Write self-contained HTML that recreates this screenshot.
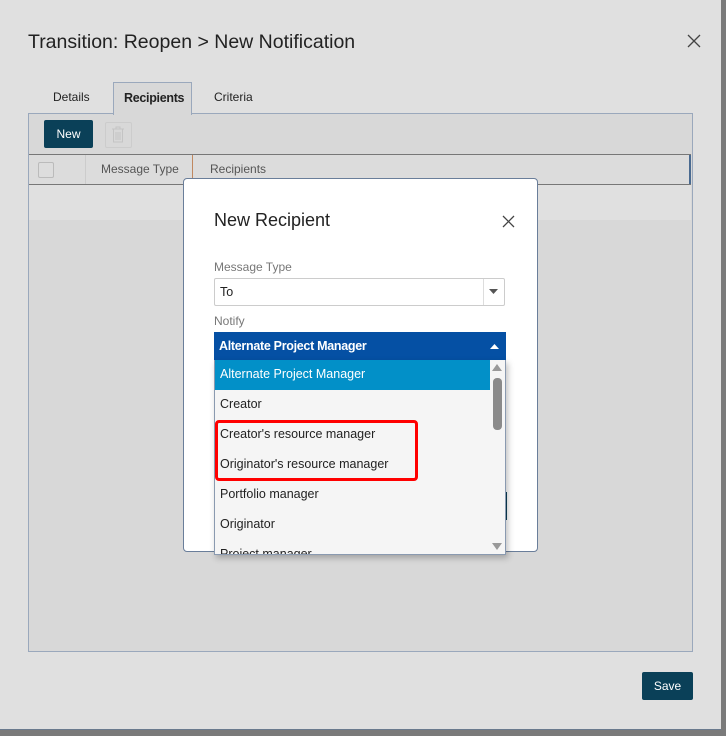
<!DOCTYPE html>
<html><head><style>
*{box-sizing:border-box;margin:0;padding:0}
body{width:726px;height:736px;background:#7a7a7a;font-family:"Liberation Sans","DejaVu Sans",sans-serif;position:relative;overflow:hidden}
.a{position:absolute}
</style></head><body>
<div class="a" style="left:0;top:0;width:721px;height:730px;background:#e0e0e0;border-bottom:1px solid #6a7a8e"></div>
<div class="a" style="left:28px;top:31px;font-size:19.5px;color:#222">Transition: Reopen &gt; New Notification</div>
<svg class="a" style="left:687px;top:34px" width="14" height="14"><path d="M1 1L13 13M13 1L1 13" stroke="#444" stroke-width="1.3"/></svg>
<div class="a" style="left:53px;top:90px;font-size:12px;color:#222">Details</div>
<div class="a" style="left:28px;top:113px;width:665px;height:539px;background:#d8d8d8;border:1px solid #9aa8bc"></div>
<div class="a" style="left:113px;top:82px;width:79px;height:33px;background:#d8d8d8;border:1px solid #9aa8bc;border-bottom:none"></div>
<div class="a" style="left:124px;top:91px;font-size:12.5px;color:#222;font-weight:bold;letter-spacing:-0.3px">Recipients</div>
<div class="a" style="left:214px;top:90px;font-size:12px;color:#222">Criteria</div>
<div class="a" style="left:44px;top:120px;width:49px;height:28px;background:#0a4058;border-radius:2px;color:#fff;font-size:12px;text-align:center;line-height:28px">New</div>
<div class="a" style="left:105px;top:122px;width:27px;height:26px;border:1px solid #ccc;border-radius:2px"></div>
<svg class="a" style="left:111px;top:126px" width="14" height="17"><path d="M1 3H13M5 3V1H9V3M2.5 3V16H11.5V3M5 6V14M7 6V14M9 6V14" stroke="#c4c4c4" fill="none"/></svg>
<div class="a" style="left:29px;top:154px;width:662px;height:31px;background:#dcdcdc;border-top:1px solid #777;border-bottom:1px solid #777"></div>
<div class="a" style="left:38px;top:162px;width:16px;height:16px;border:1px solid #bbb;border-radius:2px;background:#ddd"></div>
<div class="a" style="left:85px;top:155px;width:1px;height:29px;background:#ccc"></div>
<div class="a" style="left:192px;top:155px;width:1px;height:29px;background:#c08860"></div>
<div class="a" style="left:689px;top:155px;width:2px;height:29px;background:#4a6a90"></div>
<div class="a" style="left:101px;top:162px;font-size:12px;color:#555">Message Type</div>
<div class="a" style="left:210px;top:162px;font-size:12px;color:#555">Recipients</div>
<div class="a" style="left:29px;top:185px;width:662px;height:35px;background:#e0e0e0"></div>
<div class="a" style="left:183px;top:178px;width:355px;height:374px;background:#fff;border:1px solid #6a7e9a;border-radius:4px"></div>
<div class="a" style="left:214px;top:210px;font-size:18px;color:#222">New Recipient</div>
<svg class="a" style="left:502px;top:215px" width="13" height="13"><path d="M1 1L12 12M12 1L1 12" stroke="#444" stroke-width="1.3"/></svg>
<div class="a" style="left:214px;top:260px;font-size:12px;color:#777">Message Type</div>
<div class="a" style="left:214px;top:278px;width:291px;height:28px;border:1px solid #ccc;border-radius:2px"></div>
<div class="a" style="left:483px;top:279px;width:1px;height:26px;background:#ddd"></div>
<div class="a" style="left:220px;top:285px;font-size:12.5px;color:#222">To</div>
<svg class="a" style="left:489px;top:289px" width="9" height="6"><path d="M0 0H9L4.5 5Z" fill="#555"/></svg>
<div class="a" style="left:214px;top:314px;font-size:12px;color:#777">Notify</div>
<div class="a" style="left:214px;top:332px;width:292px;height:28px;background:#0550a4"></div>
<div class="a" style="left:219px;top:339px;font-size:12.5px;font-weight:bold;color:#fff;letter-spacing:-0.3px">Alternate Project Manager</div>
<svg class="a" style="left:490px;top:344px" width="9" height="5"><path d="M0 5H9L4.5 0Z" fill="#fff"/></svg>
<div class="a" style="left:502px;top:492px;width:5px;height:28px;background:#0a4058"></div>
<div class="a" style="left:214px;top:360px;width:292px;height:195px;background:#f5f5f5;border:1px solid #8a9ab0;border-top:none;overflow:hidden;box-shadow:2px 3px 6px rgba(0,0,0,.25)">
<div style="width:276px;height:30px;background:#0290c8;color:#fff;font-size:12.5px;padding:7px 0 0 5px">Alternate Project Manager</div>
<div style="height:30px;font-size:12.5px;color:#222;padding:7px 0 0 5px">Creator</div>
<div style="height:30px;font-size:12.5px;color:#222;padding:7px 0 0 5px">Creator's resource manager</div>
<div style="height:30px;font-size:12.5px;color:#222;padding:7px 0 0 5px">Originator's resource manager</div>
<div style="height:30px;font-size:12.5px;color:#222;padding:7px 0 0 5px">Portfolio manager</div>
<div style="height:30px;font-size:12.5px;color:#222;padding:7px 0 0 5px">Originator</div>
<div style="height:30px;font-size:12.5px;color:#222;padding:7px 0 0 5px">Project manager</div>
</div>
<div class="a" style="left:490px;top:360px;width:15px;height:194px;background:#f5f5f5"></div>
<svg class="a" style="left:492px;top:364px" width="10" height="7"><path d="M0 7H10L5 0Z" fill="#999"/></svg>
<div class="a" style="left:493px;top:378px;width:9px;height:52px;background:#8a8a8a;border-radius:4px"></div>
<svg class="a" style="left:492px;top:543px" width="10" height="7"><path d="M0 0H10L5 7Z" fill="#999"/></svg>
<div class="a" style="left:215px;top:420px;width:203px;height:61px;border:3px solid #f00;border-radius:4px"></div>
<div class="a" style="left:642px;top:672px;width:51px;height:28px;background:#0a4058;border-radius:2px;color:#fff;font-size:12px;text-align:center;line-height:28px">Save</div>
</body></html>
